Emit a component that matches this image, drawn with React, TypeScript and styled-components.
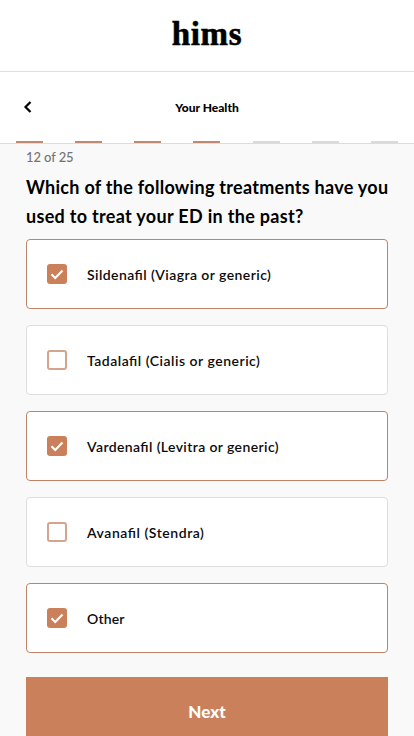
import React, { useState } from "react";
import styled, { createGlobalStyle } from "styled-components";

const GlobalStyle = createGlobalStyle`
  * { box-sizing: border-box; }
  body {
    margin: 0;
    background: #f9f9f9;
    color: #0b0b0b;
    font-family: Lato, "Open Sans", sans-serif;
    font-feature-settings: "liga" 1;
    overflow: hidden;
  }
`;

const Page = styled.div`
  height: 100vh;
  overflow: hidden;
  display: flex;
  flex-direction: column;
`;

const LogoBar = styled.header`
  flex: none;
  height: 72px;
  background: #fff;
  border-bottom: 1px solid #dedede;
  display: flex;
  justify-content: center;
  padding-top: 14px;
`;

const Logo = styled.span`
  font: 700 33px/40px "Liberation Serif", serif;
  letter-spacing: 0.7px;
  color: #000;
  -webkit-text-stroke: 0.6px #000;
`;

const StepBar = styled.div`
  flex: none;
  height: 72px;
  background: #fff;
  border-bottom: 1px solid #dcdcdc;
  display: flex;
  flex-direction: column;
  justify-content: space-between;
`;

const StepHeader = styled.div`
  height: 69px;
  display: grid;
  grid-template-columns: 56px 1fr 56px;
  align-items: center;
`;

const BackButton = styled.button`
  border: 0;
  background: none;
  padding: 0 0 0 23px;
  display: flex;
`;

const StepTitle = styled.h2`
  margin: 0;
  padding-top: 3px;
  text-align: center;
  font-size: 12px;
  line-height: 16px;
  font-weight: 900;
  color: #000;
`;

const Progress = styled.div`
  display: flex;
  justify-content: space-between;
  padding: 0 16px;
`;

const Segment = styled.span<{ $done: boolean }>`
  width: 27px;
  height: 2px;
  background: ${(p) => (p.$done ? "#c08a72" : "#dadada")};
`;

const Content = styled.main`
  display: flex;
  flex-direction: column;
  padding: 4px 26px 0;
`;

const Count = styled.div`
  font-size: 13px;
  line-height: 18px;
  font-weight: 500;
  letter-spacing: -0.1px;
  color: #747474;
`;

const Question = styled.h1`
  margin: 7px 0 8px;
  font-size: 18px;
  line-height: 29px;
  font-weight: 700;
  color: #000;
`;

const QuestionLine = styled.span<{ $spacing: number }>`
  display: block;
  white-space: nowrap;
  letter-spacing: ${(p) => p.$spacing}px;
`;

const Options = styled.div`
  display: flex;
  flex-direction: column;
  gap: 16px;
`;

const Option = styled.button<{ $checked: boolean }>`
  height: 70px;
  width: 100%;
  display: flex;
  align-items: center;
  gap: 20px;
  padding: 0 20px;
  background: #fff;
  border: 1px solid ${(p) => (p.$checked ? "#bf8468" : "#dedede")};
  border-radius: 4px;
  font-family: inherit;
  color: #0b0b0b;
`;

const Checkbox = styled.span<{ $checked: boolean }>`
  width: 20px;
  height: 20px;
  flex: none;
  border-radius: 3px;
  border: ${(p) => (p.$checked ? "0" : "2px solid #d4a48e")};
  background: ${(p) => (p.$checked ? "#ca815b" : "#fff")};
  display: flex;
  align-items: center;
  justify-content: center;
`;

const Label = styled.span<{ $spacing: number }>`
  padding-top: 1px;
  font-size: 14px;
  line-height: 18px;
  font-weight: 600;
  font-feature-settings: "liga" 1;
  white-space: nowrap;
  letter-spacing: ${(p) => p.$spacing}px;
`;

const NextButton = styled.button`
  height: 70px;
  margin-top: 24px;
  border: 0;
  background: #ca815b;
  color: #fff;
  font: 900 17px/24px Lato, sans-serif;
`;

const treatments = [
  { name: "Sildenafil (Viagra or generic)", spacing: 0.43, checked: true },
  { name: "Tadalafil (Cialis or generic)", spacing: 0.51, checked: false },
  { name: "Vardenafil (Levitra or generic)", spacing: 0.39, checked: true },
  { name: "Avanafil (Stendra)", spacing: 0.55, checked: false },
  { name: "Other", spacing: 0.15, checked: true },
];

const CheckIcon = () => (
  <svg width="20" height="20" viewBox="0 0 20 20" fill="none">
    <path d="M4.5 10.3 8.2 14 15.5 6.4" stroke="#fff" strokeWidth="2.1" />
  </svg>
);

export default function App() {
  const [selected, setSelected] = useState(treatments.map((t) => t.checked));
  const toggle = (i: number) =>
    setSelected(selected.map((value, n) => (n === i ? !value : value)));

  return (
    <Page>
      <GlobalStyle />
      <LogoBar>
        <Logo>hims</Logo>
      </LogoBar>
      <StepBar>
        <StepHeader>
          <BackButton aria-label="Back">
            <svg width="10" height="12" viewBox="0 0 10 12" fill="none">
              <path d="M7.5 1 2.5 6l5 5" stroke="#000" strokeWidth="2.2" />
            </svg>
          </BackButton>
          <StepTitle>Your Health</StepTitle>
        </StepHeader>
        <Progress>
          {[0, 1, 2, 3, 4, 5, 6].map((n) => (
            <Segment key={n} $done={n < 4} />
          ))}
        </Progress>
      </StepBar>
      <Content>
        <Count>12 of 25</Count>
        <Question>
          <QuestionLine $spacing={0.28}>Which of the following treatments have you</QuestionLine>
          <QuestionLine $spacing={0.31}>used to treat your ED in the past?</QuestionLine>
        </Question>
        <Options>
          {treatments.map((t, i) => (
            <Option
              key={t.name}
              role="checkbox"
              aria-checked={selected[i]}
              $checked={selected[i]}
              onClick={() => toggle(i)}
            >
              <Checkbox $checked={selected[i]}>{selected[i] && <CheckIcon />}</Checkbox>
              <Label $spacing={t.spacing}>{t.name}</Label>
            </Option>
          ))}
        </Options>
        <NextButton>Next</NextButton>
      </Content>
    </Page>
  );
}
